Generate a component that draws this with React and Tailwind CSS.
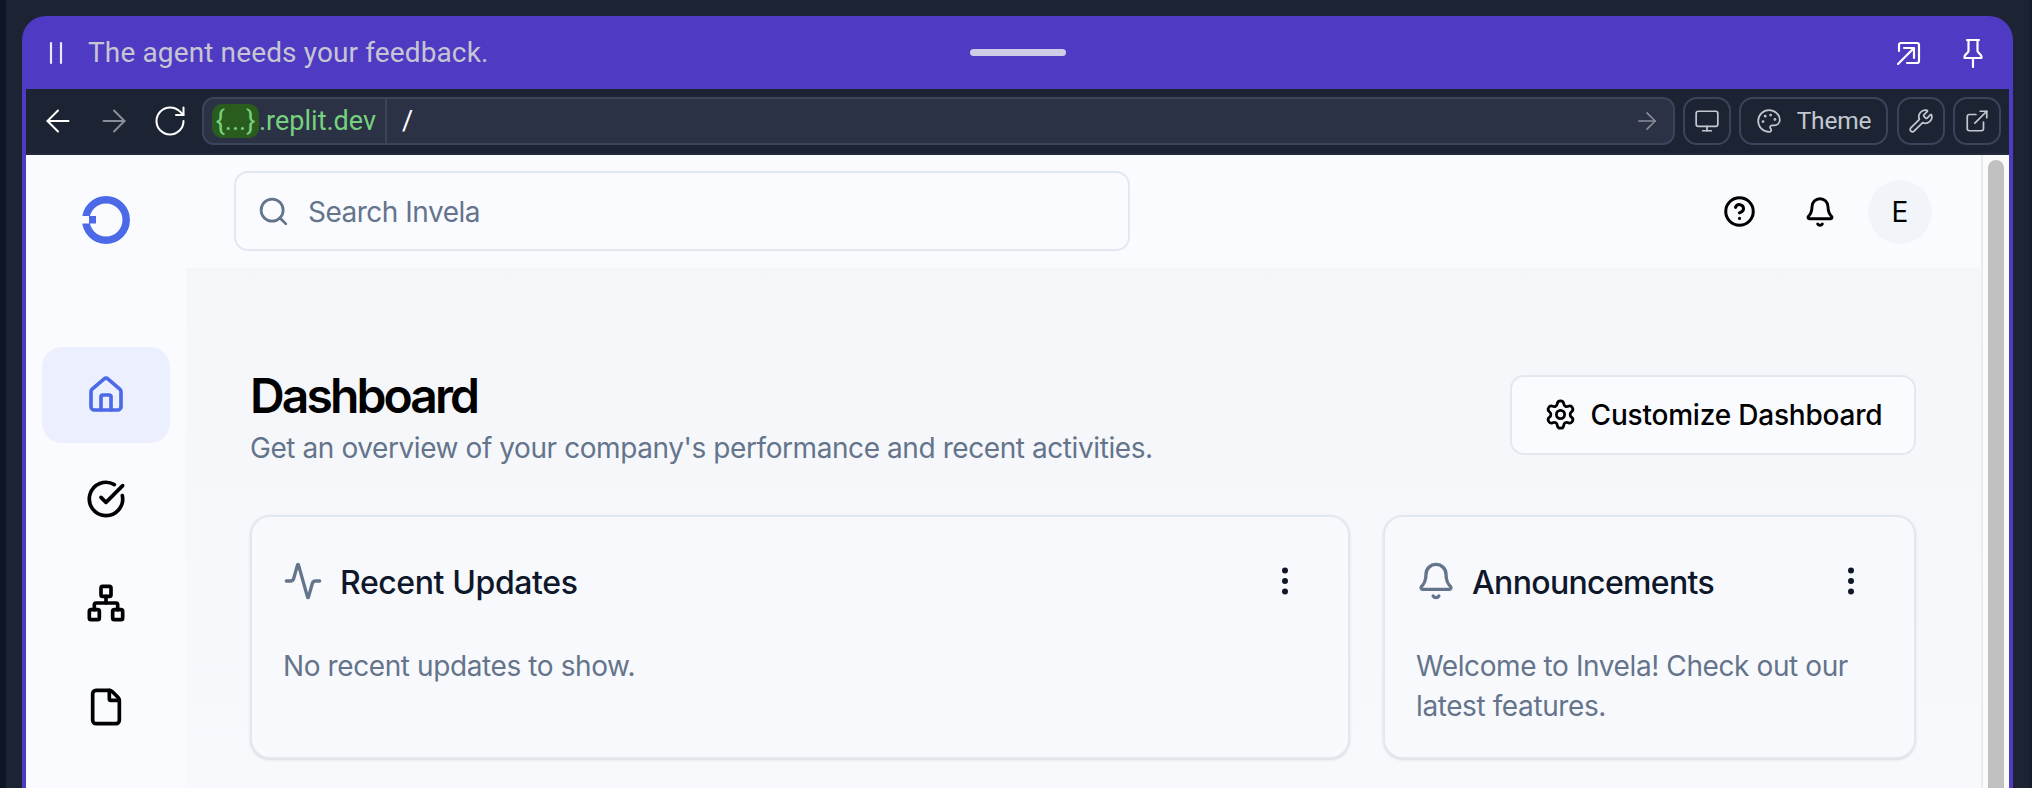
import React from 'react';
import { House, CircleCheckBig, Network, File, Activity, Bell, EllipsisVertical, Settings, Search, CircleHelp, Monitor, Palette, Wrench, ExternalLink, ArrowLeft, ArrowRight, RotateCw } from 'lucide-react';

function ToolBtn({ children }) {
  return <button className="w-[56px] h-[48px] flex items-center justify-center text-white">{children}</button>;
}
function OutlineBtn({ children, className }) {
  return <button className={"h-[48px] rounded-[14px] border-2 border-[#3c445c] flex items-center justify-center text-[#c2c8d0] " + className}>{children}</button>;
}
function NavItem({ active, children }) {
  return <div className={"w-[128px] h-[96px] rounded-[20px] flex items-center justify-center " + (active ? "bg-[#ecf0fe] text-[#4c6ae8]" : "text-black")}>{children}</div>;
}
function Card({ icon, title, titleClass, children }) {
  return (
    <div className="rounded-[20px] border-2 border-[#e2e8f0] bg-[#f8f9fd] shadow-sm pt-[42px] px-[31px] pb-[31px]">
      <div className="flex items-center h-[44px] mb-[43px]">
        <span className="text-[#64748b]">{icon}</span>
        <span className={"mt-[3px] text-[32px] leading-[44px] font-medium text-[#0f172a] " + titleClass}>{title}</span>
        <span className="ml-auto mr-[14px] text-[#0f172a]"><EllipsisVertical size={36} strokeWidth={2} /></span>
      </div>
      <div className="text-[28px] leading-[40px] tracking-[-0.4px] text-[#64748b]">{children}</div>
    </div>
  );
}

export default function App() {
  return (
    <div className="w-[2032px] h-[788px] overflow-hidden flex bg-[#1c2333] font-['Inter',sans-serif]">
      <div className="w-[6px] bg-[#0e1525] shrink-0" />
      <div className="w-[16px] shrink-0" />
      <div className="w-[1991px] h-[772px] mt-[16px] shrink-0 bg-[#4f3ac4] rounded-t-[24px] flex flex-col px-[4px] overflow-hidden">
        <div className="h-[73px] shrink-0 grid grid-cols-[1fr_auto_1fr] items-center font-['Roboto',sans-serif]">
          <div className="flex items-center">
            <svg width="14" height="24" viewBox="0 0 14 24" className="ml-[23px]" fill="none" stroke="#e9e7fa" strokeWidth="2.2" strokeLinecap="round"><path d="M2 2v20M12 2v20" /></svg>
            <span className="ml-[25px] text-[28px] leading-[40px] tracking-[0.13px] text-[#c6c6d2]">The agent needs your feedback.</span>
          </div>
          <div className="w-[96px] h-[7px] rounded-full bg-[#cfcce8]" />
          <div className="flex items-center justify-end">
            <svg width="24" height="24" viewBox="0 0 24 24" fill="none" stroke="#fff" strokeWidth="2.2" strokeLinecap="round" strokeLinejoin="round" className="mr-[42px]">
              <path d="M2 10V4a2 2 0 0 1 2-2h16a2 2 0 0 1 2 2v16a2 2 0 0 1-2 2h-10" />
              <path d="M1 23L17 7M7 7h10v10" />
            </svg>
            <svg width="20" height="30" viewBox="0 0 20 30" fill="none" stroke="#fff" strokeWidth="2.2" strokeLinecap="round" strokeLinejoin="round" className="mr-[26px]">
              <path d="M4 2h12M5.5 2v11c0 2-4 3-4 6v1h17v-1c0-3-4-4-4-6V2M10 20v9" />
            </svg>
          </div>
        </div>

        <div className="h-[66px] shrink-0 bg-[#1c2333] border-b-2 border-[#232a3c] flex items-start pt-[8px] pl-[4px] pr-[8px] font-['Roboto',sans-serif]">
          <ToolBtn><ArrowLeft size={36} strokeWidth={1.35} /></ToolBtn>
          <ToolBtn><ArrowRight size={36} strokeWidth={1.35} className="text-[#8b8e98]" /></ToolBtn>
          <ToolBtn><RotateCw size={36} strokeWidth={1.35} /></ToolBtn>
          <div className="ml-[4px] w-[1473px] h-[48px] rounded-[12px] border-2 border-[#3c445c] bg-[#2b3245] flex items-center">
            <div className="pl-[8px] pr-[8px] h-full flex items-center border-r-2 border-[#3c445c] text-[27px] text-[#76d17d] w-[183px]">
              <span className="bg-[#2a5c1e] rounded-[10px] h-[34px] w-[47px] flex items-center justify-center leading-none">{"{...}"}</span>
              <span>.replit.dev</span>
            </div>
            <span className="ml-[15px] mt-[1px] text-[27px] text-white">/</span>
            <ArrowRight size={28} strokeWidth={1.35} className="ml-auto mr-[12px] text-[#8b8e98]" />
          </div>
          <OutlineBtn className="ml-[8px] w-[48px]"><Monitor size={26} strokeWidth={1.6} /></OutlineBtn>
          <OutlineBtn className="ml-[8px] w-[149px]">
            <Palette size={26} strokeWidth={1.6} />
            <span className="ml-[15px] text-[24.5px] tracking-[-0.2px] leading-none">Theme</span>
          </OutlineBtn>
          <OutlineBtn className="ml-[9px] w-[48px]"><Wrench size={26} strokeWidth={1.6} /></OutlineBtn>
          <OutlineBtn className="ml-[8px] w-[48px]"><ExternalLink size={26} strokeWidth={1.6} /></OutlineBtn>
        </div>

        <div className="flex-1 min-h-0 flex">
          <div className="w-[1955px] shrink-0 flex bg-[#fafbff]">
            <div className="w-[160px] shrink-0 flex flex-col items-center">
              <div className="h-[113px] flex items-center justify-center shrink-0 pt-[16px]">
                <svg width="48" height="48" viewBox="0 0 48 48">
                  <circle cx="24" cy="24" r="20.2" fill="none" stroke="#4c6ae8" strokeWidth="7.5" />
                  <rect x="0" y="20" width="7" height="7.5" fill="#fafbff" />
                  <rect x="7" y="20" width="7" height="7.5" fill="#4c6ae8" />
                </svg>
              </div>
              <div className="pt-[79px] flex flex-col gap-[8px]">
                <NavItem active><House size={40} strokeWidth={2.2} /></NavItem>
                <NavItem><CircleCheckBig size={40} strokeWidth={2.2} /></NavItem>
                <NavItem><Network size={40} strokeWidth={2.2} /></NavItem>
                <NavItem><File size={40} strokeWidth={2.2} /></NavItem>
              </div>
            </div>
            <div className="flex-1 min-w-0 flex flex-col">
              <div className="h-[113px] shrink-0 flex items-center pl-[48px] pr-[49px]">
                <div className="w-[896px] h-[80px] mb-[1px] rounded-[14px] border-2 border-[#e2e8f0] flex items-center pl-[21px]">
                  <Search size={33} strokeWidth={2} className="text-[#64748b]" />
                  <span className="ml-[18px] mt-[1px] text-[28px] tracking-[-0.5px] text-[#64748b]">Search Invela</span>
                </div>
                <div className="ml-auto flex items-center gap-[16px]">
                  <div className="w-[64px] h-[64px] flex items-center justify-center text-black"><CircleHelp size={33} strokeWidth={2.2} className="-translate-x-px" /></div>
                  <div className="w-[64px] h-[64px] flex items-center justify-center text-black"><Bell size={32} strokeWidth={2.2} /></div>
                  <div className="w-[64px] h-[64px] rounded-full bg-[#f1f5f9] flex items-center justify-center text-[28px] text-black">E</div>
                </div>
              </div>
              <div className="flex-1 min-h-0 bg-gradient-to-b from-[#f4f6fa] to-[#f8f9fd] pl-[64px] pr-[65px] pt-[96px]">
                <div className="flex items-center justify-between mb-[47px]">
                  <div>
                    <h1 className="text-[48px] leading-[64px] font-semibold tracking-[-2.9px] text-black">Dashboard</h1>
                    <p className="text-[28px] leading-[40px] tracking-[-0.42px] text-[#64748b]">Get an overview of your company's performance and recent activities.</p>
                  </div>
                  <button className="w-[406px] h-[80px] mb-[3px] rounded-[14px] border-2 border-[#e2e8f0] bg-[#fafbff] flex items-center justify-center text-black">
                    <Settings size={33} strokeWidth={2} />
                    <span className="ml-[14px] text-[28px] font-medium tracking-[-0.2px]">Customize Dashboard</span>
                  </button>
                </div>
                <div className="grid grid-cols-[1100px_533px] gap-[33px]">
                  <Card icon={<Activity size={40} strokeWidth={2} />} title="Recent Updates" titleClass="ml-[17px] tracking-[-0.4px]">No recent updates to show.</Card>
                  <Card icon={<Bell size={40} strokeWidth={2} />} title="Announcements" titleClass="ml-[16px] tracking-[-0.65px]">Welcome to Invela! Check out our latest features.</Card>
                </div>
              </div>
            </div>
          </div>
          <div className="w-[28px] shrink-0 bg-[#fafafa] border-l-2 border-[#ebebeb] pl-[5px] pt-[5px]">
            <div className="w-[16px] h-[800px] rounded-full bg-[#c1c1c1]" />
          </div>
        </div>
      </div>
      <div className="w-[16px] shrink-0" />
      <div className="flex-1 bg-[#161c2c]" />
    </div>
  );
}
